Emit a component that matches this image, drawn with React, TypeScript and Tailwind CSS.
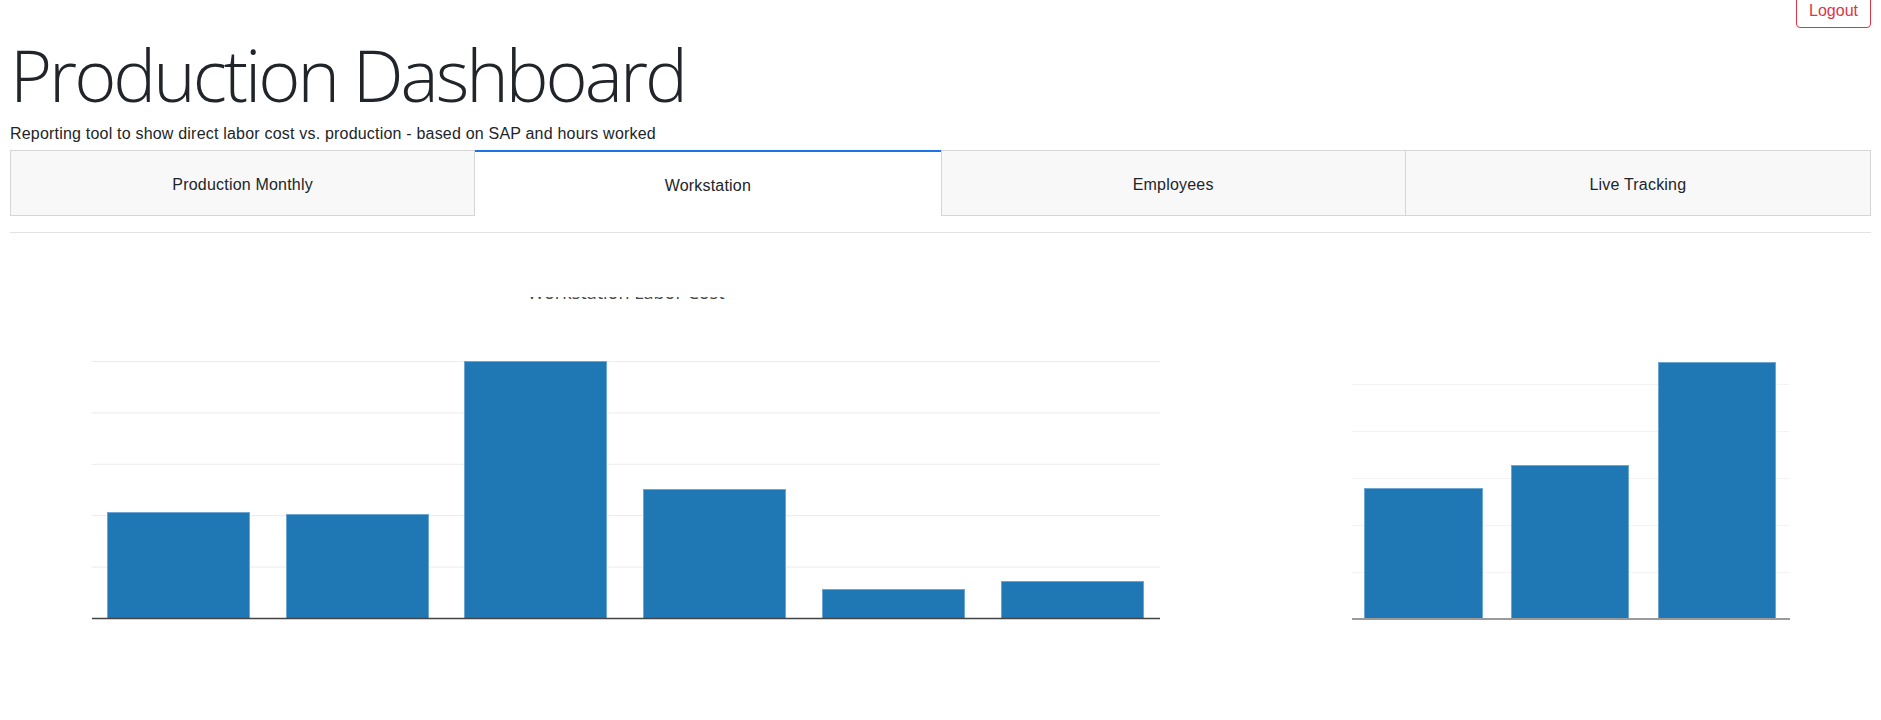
const workstationBars = [
  { x: 97, top: 212 },
  { x: 276, top: 214 },
  { x: 454, top: 61 },
  { x: 633, top: 189 },
  { x: 812, top: 289 },
  { x: 991, top: 281 },
];

const shiftBars = [
  { x: 124, w: 118, top: 188 },
  { x: 271, w: 117, top: 165 },
  { x: 418, w: 117, top: 62 },
];

const tabs = ["Production Monthly", "Workstation", "Employees", "Live Tracking"];

function Tabs({ active }: { active: number }) {
  return (
    <div className="mt-[4px] grid h-[66px] grid-cols-4">
      {tabs.map((label, i) =>
        i === active ? (
          <div
            key={label}
            className="flex items-center justify-center border-t-2 border-[#1a73e8] bg-white pt-[4px] text-[16px] tracking-[0.2px] text-[#212529]"
          >
            {label}
          </div>
        ) : (
          <div
            key={label}
            className={
              "flex items-center justify-center border border-[#d6d6d6] bg-[#f8f8f8] pt-[3px] text-[16px] tracking-[0.2px] text-[#212529]" +
              (i > 0 && i !== active + 1 ? " border-l-0" : "")
            }
          >
            {label}
          </div>
        ),
      )}
    </div>
  );
}

function WorkstationChart() {
  const grid = [61, 112.4, 163.8, 215.2, 266.6];
  return (
    <svg width={1220} height={380} className="block">
      {grid.map((y) => (
        <line key={y} x1={82} x2={1150} y1={y + 0.5} y2={y + 0.5} stroke="#ebebeb" strokeWidth={1} />
      ))}
      {workstationBars.map((b) => (
        <rect
          key={b.x}
          x={b.x + 0.5}
          y={b.top + 0.5}
          width={142}
          height={318 - b.top}
          fill="#1f77b4"
          stroke="#6ea6d3"
          strokeWidth={1}
        />
      ))}
      <line x1={82} x2={1150} y1={318.5} y2={318.5} stroke="#444" strokeWidth={1.5} />
    </svg>
  );
}

function ShiftChart() {
  const grid = [84, 131, 178, 225, 272];
  return (
    <svg width={630} height={380} className="block">
      {grid.map((y) => (
        <line key={y} x1={112} x2={550} y1={y + 0.5} y2={y + 0.5} stroke="#f3f3f3" strokeWidth={1} />
      ))}
      {shiftBars.map((b) => (
        <rect
          key={b.x}
          x={b.x + 0.5}
          y={b.top + 0.5}
          width={b.w}
          height={319 - b.top}
          fill="#1f77b4"
          stroke="#6ea6d3"
          strokeWidth={1}
        />
      ))}
      <line x1={112} x2={550} y1={319} y2={319} stroke="#9a9a9a" strokeWidth={2} />
    </svg>
  );
}

export default function App() {
  return (
    <div className="min-h-[720px] w-full overflow-hidden bg-white px-[10px] font-['Segoe_UI','Liberation_Sans',sans-serif] text-[#212529]">
      <div className="flex h-[28px] justify-end">
        <button className="-mt-[7px] h-[35px] rounded-[4px] border border-[#dc3545] px-[12px] text-[16px] text-[#dc3545]">
          Logout
        </button>
      </div>

      <h1 className="mt-[3px] h-[86px] font-['Open_Sans',sans-serif] text-[72px] font-light leading-[86px] tracking-[-3px] text-[#212529]">
        Production Dashboard
      </h1>
      <p className="mt-[5px] text-[16px] leading-6 tracking-[0.2px]">
        Reporting tool to show direct labor cost vs. production - based on SAP and hours worked
      </p>

      <Tabs active={1} />

      <hr className="mt-[16px] border-t border-[#e2e2e2]" />

      <div className="flex">
        <div className="w-[1220px] shrink-0">
          <div className="mt-[64px] h-[2px] overflow-hidden pl-[82px] pr-[70px]">
            <div className="-mt-[14px] text-center font-['Open_Sans',sans-serif] text-[18px] leading-[18px] text-[#444]">
              Workstation Labor Cost
            </div>
          </div>
          <div className="h-px" />
          <WorkstationChart />
        </div>
        <div className="ml-[10px] mt-[67px]">
          <ShiftChart />
        </div>
      </div>
    </div>
  );
}
